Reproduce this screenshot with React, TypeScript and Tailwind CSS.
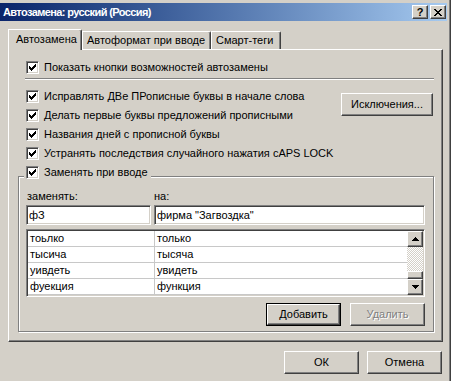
import type { ReactNode } from "react"

const raised =
  "bg-[#d4d0c8] border border-t-white border-l-white border-r-[#404040] border-b-[#404040] shadow-[inset_-1px_-1px_0_#808080]"
const sunken =
  "bg-white border border-t-[#808080] border-l-[#808080] border-r-white border-b-white shadow-[inset_1px_1px_0_#404040,inset_-1px_-1px_0_#d4d0c8]"

// маленькие пиксельные картинки (галочка, крестик)
function Pixels({ rows, color = "#000" }: { rows: string[]; color?: string }) {
  return (
    <svg width={rows[0].length} height={rows.length} shapeRendering="crispEdges">
      {rows.flatMap((r, y) =>
        r.split("").map((c, x) =>
          c === "X" ? <rect key={x + "-" + y} x={x} y={y} width={1} height={1} fill={color} /> : null
        )
      )}
    </svg>
  )
}

const checkRows = ["......X", ".....XX", "X...XXX", "XX.XXX.", "XXXXX..", ".XXX...", "..X...."]
const closeRows = ["XX....XX", ".XX..XX.", "..XXXX..", "...XX...", "..XXXX..", ".XX..XX.", "XX....XX"]
const upRows = ["...X...", "..XXX..", ".XXXXX.", "XXXXXXX"]
const downRows = ["XXXXXXX", ".XXXXX.", "..XXX..", "...X..."]

function Check() {
  return (
    <span className={"w-[13px] h-[13px] shrink-0 flex items-center justify-center " + sunken}>
      <Pixels rows={checkRows} />
    </span>
  )
}

function CheckRow({ label, h = "h-[19px]" }: { label: string; h?: string }) {
  return (
    <div className={"flex items-center gap-[5px] pl-[17px] whitespace-nowrap " + h}>
      <Check />
      <span>{label}</span>
    </div>
  )
}

function Button({ children, w = "w-[75px]", def = false, disabled = false }: { children: ReactNode; w?: string; def?: boolean; disabled?: boolean }) {
  const inner = (
    <div className={"h-full flex items-center justify-center " + raised + (disabled ? " text-[#808080] [text-shadow:1px_1px_0_#fff]" : "")}>
      {children}
    </div>
  )
  if (def) {
    return <div className={"h-[23px] border border-black " + w}>{inner}</div>
  }
  return <div className={"h-[23px] " + w}>{inner}</div>
}

function TitleButton({ children }: { children: ReactNode }) {
  return (
    <div className={"w-[16px] h-[14px] flex items-center justify-center " + raised}>{children}</div>
  )
}

const words = [
  ["тоьлко", "только"],
  ["тысича", "тысяча"],
  ["уивдеть", "увидеть"],
  ["фуекция", "функция"],
]

export default function App() {
  return (
    <div className="w-[451px] h-[381px] bg-[#d4d0c8] overflow-hidden flex font-['Liberation_Sans',sans-serif] text-[11px] leading-none text-black">
      <div className="w-[447px] flex flex-col">
        <div className="h-[3px]" />
        {/* заголовок */}
        <div className="h-[18px] flex items-center bg-linear-to-r from-[#0a246a] to-[#a6caf0] pl-[3px] pr-[1px]">
          <span className="grow text-white font-bold text-[11px] tracking-[-0.6px] whitespace-nowrap">Автозамена: русский (Россия)</span>
          <TitleButton>
            <span className="font-bold text-[11px] leading-none mt-[1px]">?</span>
          </TitleButton>
          <div className="w-[2px]" />
          <TitleButton>
            <Pixels rows={closeRows} />
          </TitleButton>
        </div>

        {/* вкладки */}
        <div className="mt-[8px] ml-[8px] h-[20px] flex items-end">
          <div className="relative z-10 -mb-px h-[21px] w-[74px] bg-[#d4d0c8] border-t border-l border-t-white border-l-white border-r border-r-[#404040] shadow-[inset_-1px_0_0_#808080] rounded-tr-[2px] flex items-center pl-[7px] pb-[2px]">
            Автозамена
          </div>
          <div className="h-[18px] w-[129px] border-t border-l border-t-white border-l-white border-r border-r-[#404040] shadow-[inset_-1px_0_0_#808080] rounded-tr-[2px] flex items-center pl-[4px]">
            Автоформат при вводе
          </div>
          <div className="h-[18px] w-[70px] border-t border-l border-t-white border-l-white border-r border-r-[#404040] shadow-[inset_-1px_0_0_#808080] rounded-tr-[2px] flex items-center pl-[4px]">
            Смарт-теги
          </div>
        </div>

        {/* панель */}
        <div className="ml-[8px] w-[435px] h-[293px] flex flex-col border border-t-white border-l-white border-r-[#404040] border-b-[#404040] shadow-[inset_-1px_-1px_0_#808080]">
          <div className="mt-[8px]">
            <CheckRow label="Показать кнопки возможностей автозамены" h="h-[18px]" />
          </div>
          <div className="mt-[2px] ml-[16px] w-[409px] h-[2px] border-t border-t-[#808080] border-b border-b-white" />

          <div className="mt-[7px] flex">
            <div className="flex flex-col">
              <CheckRow label="Исправлять ДВе ПРописные буквы в начале слова" />
              <CheckRow label="Делать первые буквы предложений прописными" />
              <CheckRow label="Названия дней с прописной буквы" />
              <CheckRow label="Устранять последствия случайного нажатия cAPS LOCK" />
            </div>
            <div className="ml-auto mr-[9px] mt-[6px]">
              <Button w="w-[92px]">Исключения...</Button>
            </div>
          </div>

          {/* группа */}
          <div className="ml-[9px] flex flex-col">
            <div className="relative z-10 mt-[3px] ml-[6px] w-fit h-[13px] bg-[#d4d0c8] flex items-center gap-[5px] pl-[2px] pr-[3px]">
              <Check />
              <span className="whitespace-nowrap">Заменять при вводе</span>
            </div>
            <div className="-mt-[3px] w-[416px] h-[156px] border border-[#808080] shadow-[inset_1px_1px_0_#fff,1px_1px_0_#fff] flex flex-col pl-[7px] pr-[8px]">
              <div className="mt-[12px] h-[14px] flex items-center">
                <span className="w-[128px] pl-[1px]">заменять:</span>
                <span>на:</span>
              </div>
              <div className="mt-[2px] flex gap-[3px]">
                <div className={"w-[125px] h-[20px] flex items-center pl-[2px] " + sunken}>фЗ</div>
                <div className={"w-[271px] h-[20px] flex items-center pl-[2px] " + sunken}>фирма "Загвоздка"</div>
              </div>
              <div className={"mt-[4px] w-[399px] h-[68px] flex overflow-hidden p-[1px] " + sunken}>
                <div className="grow flex flex-col">
                  {words.map((w, i) => (
                    <div key={i} className="h-[16px] shrink-0 flex border-b border-b-[#c8c8c8]">
                      <div className="w-[127px] border-r border-r-[#c8c8c8] flex items-center pl-[2px]">{w[0]}</div>
                      <div className="grow flex items-center pl-[2px]">{w[1]}</div>
                    </div>
                  ))}
                </div>
                <div className="w-[16px] flex flex-col">
                  <div className={"h-[16px] shrink-0 flex items-center justify-center " + raised}>
                    <Pixels rows={upRows} />
                  </div>
                  <div className="grow bg-[repeating-conic-gradient(#d4d0c8_0_25%,#ffffff_0_50%)] bg-[length:2px_2px]" />
                  <div className={"h-[8px] shrink-0 " + raised} />
                  <div className={"h-[16px] shrink-0 flex items-center justify-center " + raised}>
                    <Pixels rows={downRows} />
                  </div>
                </div>
              </div>
              <div className="mt-[6px] flex justify-end gap-[9px]">
                <Button def>Добавить</Button>
                <Button disabled>Удалить</Button>
              </div>
            </div>
          </div>
        </div>

        {/* нижние кнопки */}
        <div className="mt-[9px] flex justify-end gap-[8px] pr-[5px]">
          <Button>ОК</Button>
          <Button>Отмена</Button>
        </div>
      </div>
      <div className="w-[4px] border-r border-r-[#404040] shadow-[inset_-1px_0_0_#808080]" />
    </div>
  )
}
